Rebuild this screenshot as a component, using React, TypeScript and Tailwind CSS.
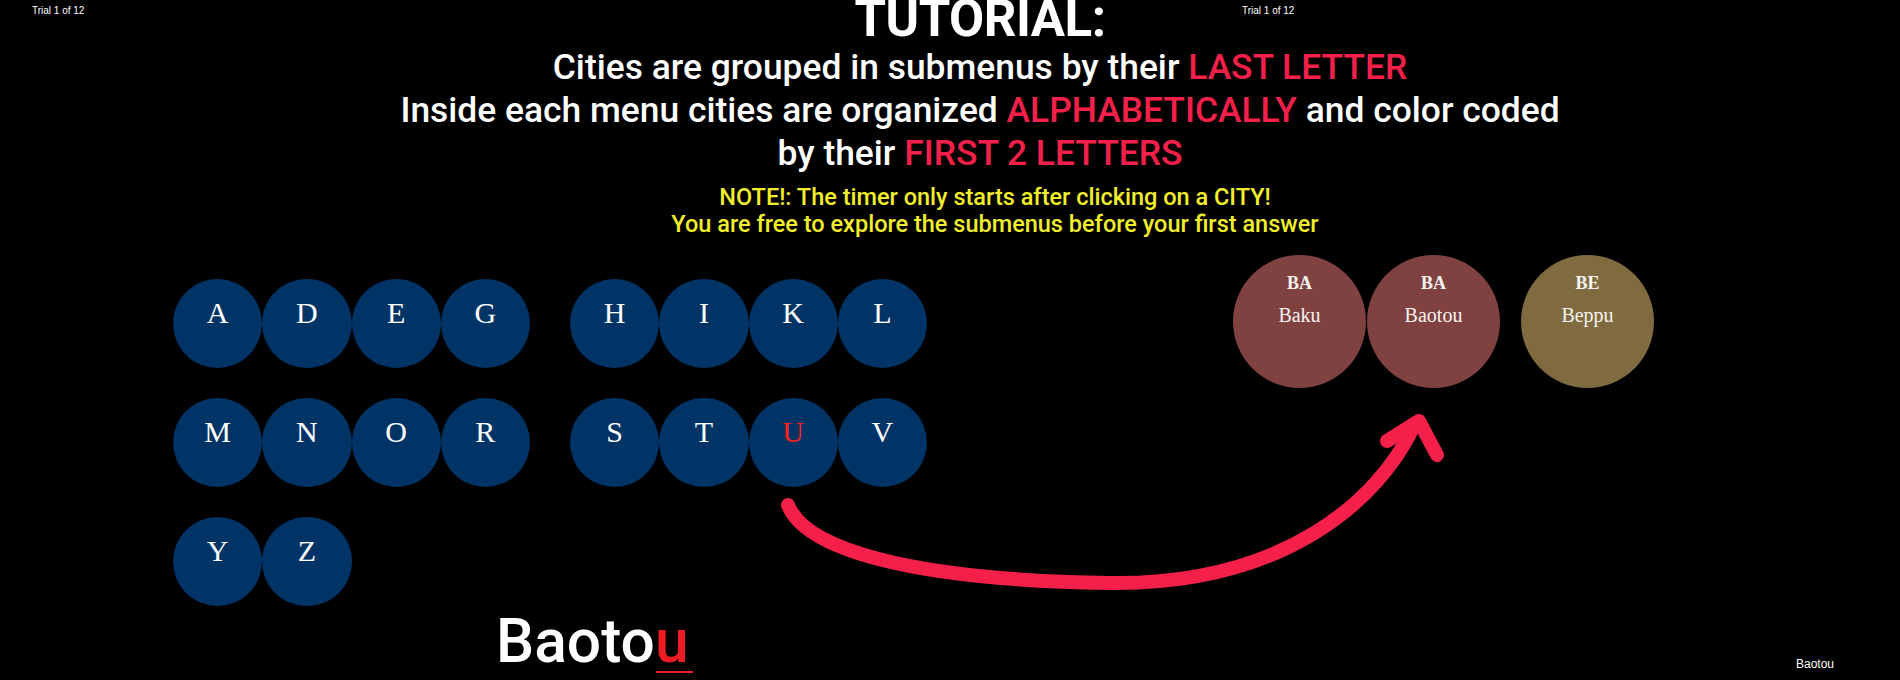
import React from "react";

const RED = "text-[#f5204a]";

function LetterCircle({ l }: { l: string }) {
  return (
    <div className="w-[89.25px] h-[89px] rounded-full bg-[#003366] flex justify-center pt-[17px]">
      <span
        className={`font-['Liberation_Serif',serif] text-[30px] leading-[1.107] ${
          l === "U" ? "text-[#ff1f1f]" : "text-white"
        }`}
      >
        {l}
      </span>
    </div>
  );
}

function CityCircle({ code, name, color }: { code: string; name: string; color: string }) {
  return (
    <div
      className={`w-[133px] h-[133px] rounded-full ${color} flex flex-col items-center pt-[18px] font-['Liberation_Serif',serif] text-[#f7f3f0]`}
    >
      <span className="text-[18px] leading-[20px] font-bold">{code}</span>
      <span className="mt-[11px] text-[20px] leading-[22px]">{name}</span>
    </div>
  );
}

export default function App() {
  const group1 = ["A", "D", "E", "G", "M", "N", "O", "R", "Y", "Z"];
  const group2 = ["H", "I", "K", "L", "S", "T", "U", "V"];
  return (
    <div className="relative w-[1900px] h-[680px] bg-black overflow-hidden font-['Roboto','Liberation_Sans',sans-serif]">
      <div className="absolute left-[32px] top-[3px] text-[10px] text-white font-['Liberation_Sans',sans-serif]">
        Trial 1 of 12
      </div>
      <div className="absolute left-[1242px] top-[3px] text-[10px] text-white font-['Liberation_Sans',sans-serif]">
        Trial 1 of 12
      </div>
      <div className="absolute left-[1796px] top-[655px] text-[12px] text-white font-['Liberation_Sans',sans-serif]">
        Baotou
      </div>

      <div className="flex flex-col items-center pl-[60px] text-white font-medium">
        <h1 className="h-[46px] text-[51px] leading-[38px] font-bold tracking-[-0.5px]">TUTORIAL:</h1>
        <p className="text-[35.4px] leading-[43px] text-center whitespace-nowrap">
          Cities are grouped in submenus by their <span className={RED}>LAST LETTER</span>
        </p>
        <p className="text-[35.4px] leading-[43px] text-center whitespace-nowrap">
          Inside each menu cities are organized <span className={RED}>ALPHABETICALLY</span> and color coded
        </p>
        <p className="text-[35.4px] leading-[43px] text-center whitespace-nowrap">
          by their <span className={RED}>FIRST 2 LETTERS</span>
        </p>
        <div className="mt-[9px] pl-[30px] text-[23.5px] leading-[27px] text-[#f2ef2a] text-center">
          <p>NOTE!: The timer only starts after clicking on a CITY!</p>
          <p>You are free to explore the submenus before your first answer</p>
        </div>
      </div>

      <div className="mt-[16.6px] flex items-start">
        <div className="pl-[173px] pt-[24px]">
          <div className="flex gap-[40px] items-start">
            <div className="grid grid-cols-[repeat(4,89.25px)] gap-y-[30px]">
              {group1.map((l) => (
                <LetterCircle key={l} l={l} />
              ))}
            </div>
            <div className="grid grid-cols-[repeat(4,89.25px)] gap-y-[30px]">
              {group2.map((l) => (
                <LetterCircle key={l} l={l} />
              ))}
            </div>
          </div>
          <div className="mt-[6px] pl-[323px] text-[60.5px] leading-[60px] text-white font-medium whitespace-nowrap">
            Baoto
            <span className="relative text-[#ed1c24]">
              u
              <span className="absolute left-[1px] right-[-4px] top-[65px] h-[2px] bg-[#ed1c24]" />
            </span>
          </div>
        </div>
        <div className="ml-[306px] flex gap-[21px]">
          <div className="flex gap-[1px]">
            <CityCircle code="BA" name="Baku" color="bg-[#804141]" />
            <CityCircle code="BA" name="Baotou" color="bg-[#804141]" />
          </div>
          <CityCircle code="BE" name="Beppu" color="bg-[#806b40]" />
        </div>
      </div>

      <svg
        className="absolute inset-0 pointer-events-none"
        width="1900"
        height="680"
        viewBox="0 0 1900 680"
      >
        <path
          d="M 788 505 C 805 548, 905 580, 1110 583 C 1285 585, 1378 500, 1413 428"
          fill="none"
          stroke="#f5204a"
          strokeWidth="14"
          strokeLinecap="round"
        />
        <polyline
          points="1387,441 1419,421 1437,455"
          fill="none"
          stroke="#f5204a"
          strokeWidth="14"
          strokeLinecap="round"
          strokeLinejoin="round"
        />
      </svg>
    </div>
  );
}
